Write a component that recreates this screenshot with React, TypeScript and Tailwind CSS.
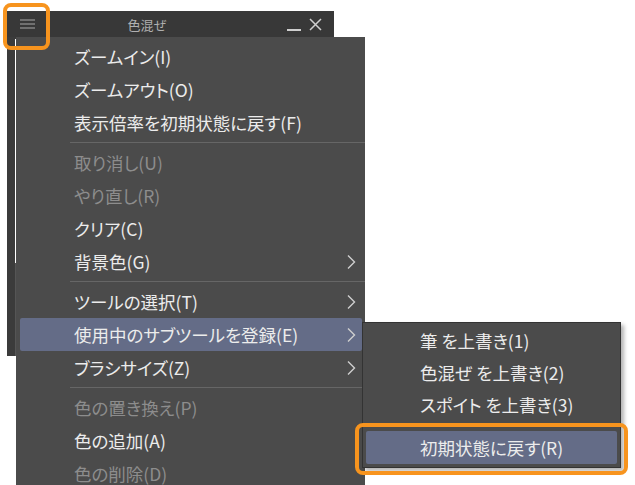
import React from "react";

type Item =
  | { type: "sep" }
  | { type: "item"; label: string; disabled?: boolean; sub?: boolean; active?: boolean };

const items: Item[] = [
  { type: "item", label: "ズームイン(I)" },
  { type: "item", label: "ズームアウト(O)" },
  { type: "item", label: "表示倍率を初期状態に戻す(F)" },
  { type: "sep" },
  { type: "item", label: "取り消し(U)", disabled: true },
  { type: "item", label: "やり直し(R)", disabled: true },
  { type: "item", label: "クリア(C)" },
  { type: "item", label: "背景色(G)", sub: true },
  { type: "sep" },
  { type: "item", label: "ツールの選択(T)", sub: true },
  { type: "item", label: "使用中のサブツールを登録(E)", sub: true, active: true },
  { type: "item", label: "ブラシサイズ(Z)", sub: true },
  { type: "sep" },
  { type: "item", label: "色の置き換え(P)", disabled: true },
  { type: "item", label: "色の追加(A)" },
  { type: "item", label: "色の削除(D)", disabled: true },
];

function Chevron() {
  return (
    <svg width="10" height="16" viewBox="0 0 10 16" className="shrink-0">
      <polyline points="2,1.5 8.5,8 2,14.5" fill="none" stroke="#cfcfcf" strokeWidth="1.4" />
    </svg>
  );
}

const font = "font-['Noto_Sans_CJK_JP','Noto_Sans',sans-serif] [font-feature-settings:'palt']";

export default function App() {
  return (
    <div className={`relative w-[635px] h-[485px] overflow-hidden bg-white ${font}`}>
      {/* Panel window */}
      <div className="ml-[7px] mt-[11px] w-[327px] flex flex-col">
        <div className="h-[26px] bg-[#383838] flex items-center relative">
          <div className="ml-[13px] w-[15px] flex flex-col gap-[2.5px]">
            <div className="h-[1.5px] bg-[#707070]" />
            <div className="h-[1.5px] bg-[#707070]" />
            <div className="h-[1.5px] bg-[#707070]" />
          </div>
          <div className="flex-1 text-center text-[13px] leading-none text-[#b0b0b0] -ml-[28px] pt-[1px]">色混ぜ</div>
          <div className="flex items-center gap-[8px] mr-[12px]">
            <div className="w-[14px] h-[1.5px] bg-[#cfcfcf] mt-[12px]" />
            <svg width="13" height="13" viewBox="0 0 13 13">
              <path d="M1 1 L12 12 M12 1 L1 12" stroke="#cfcfcf" strokeWidth="1.5" />
            </svg>
          </div>
        </div>
        <div className="h-[319px] bg-[#3b3b3b] flex">
          <div className="ml-[8px] mt-[2px] w-px flex flex-col">
            <div className="h-[224px] bg-white" />
            <div className="flex-1 bg-[#555555]" />
          </div>
        </div>
      </div>

      {/* Main context menu */}
      <div className="absolute left-[16px] top-[37px] w-[349px] h-[460px] bg-[#4b4b4b] pt-[3px] flex flex-col">
        {items.map((it, i) =>
          it.type === "sep" ? (
            <div key={i} className="h-[7px] flex items-center pl-[54px]">
              <div className="h-px w-full bg-[#666666]" />
            </div>
          ) : (
            <div
              key={i}
              className={`h-[33px] ml-[4px] mr-[3px] rounded-[2px] flex items-center pl-[54px] pr-[6px] text-[17.5px] ${
                it.active ? "bg-[#646c87]" : ""
              } ${it.disabled ? "text-[#8d8d8d]" : "text-[#ececec]"}`}
            >
              <span className="flex-1 whitespace-nowrap leading-none">{it.label}</span>
              {it.sub && <Chevron />}
            </div>
          )
        )}
      </div>

      {/* Submenu */}
      <div className="absolute left-[362px] top-[322px] w-[259px] h-[146px] bg-[#4b4b4b] border border-[#333333] shadow-[3px_3px_4px_rgba(0,0,0,0.3)] pt-[2px] flex flex-col">
        {["筆 を上書き(1)", "色混ぜ を上書き(2)", "スポイト を上書き(3)"].map((t) => (
          <div key={t} className="h-[32px] flex items-center pl-[57px] text-[17.5px] text-[#ececec] whitespace-nowrap leading-none">
            {t}
          </div>
        ))}
        <div className="h-[10px]" />
        <div className="h-[33px] mx-[3px] rounded-[2px] bg-[#646c87] flex items-center pl-[54px] text-[17.5px] text-[#ececec] whitespace-nowrap leading-none">
          初期状態に戻す(R)
        </div>
      </div>

      {/* Orange callouts */}
      <div className="absolute left-[3px] top-[3px] w-[47px] h-[47px] border-[4px] border-[#f7941e] rounded-[8px]" />
      <div className="absolute left-[355px] top-[423px] w-[273px] h-[52px] border-[4px] border-[#f7941e] rounded-[8px]" />
    </div>
  );
}
